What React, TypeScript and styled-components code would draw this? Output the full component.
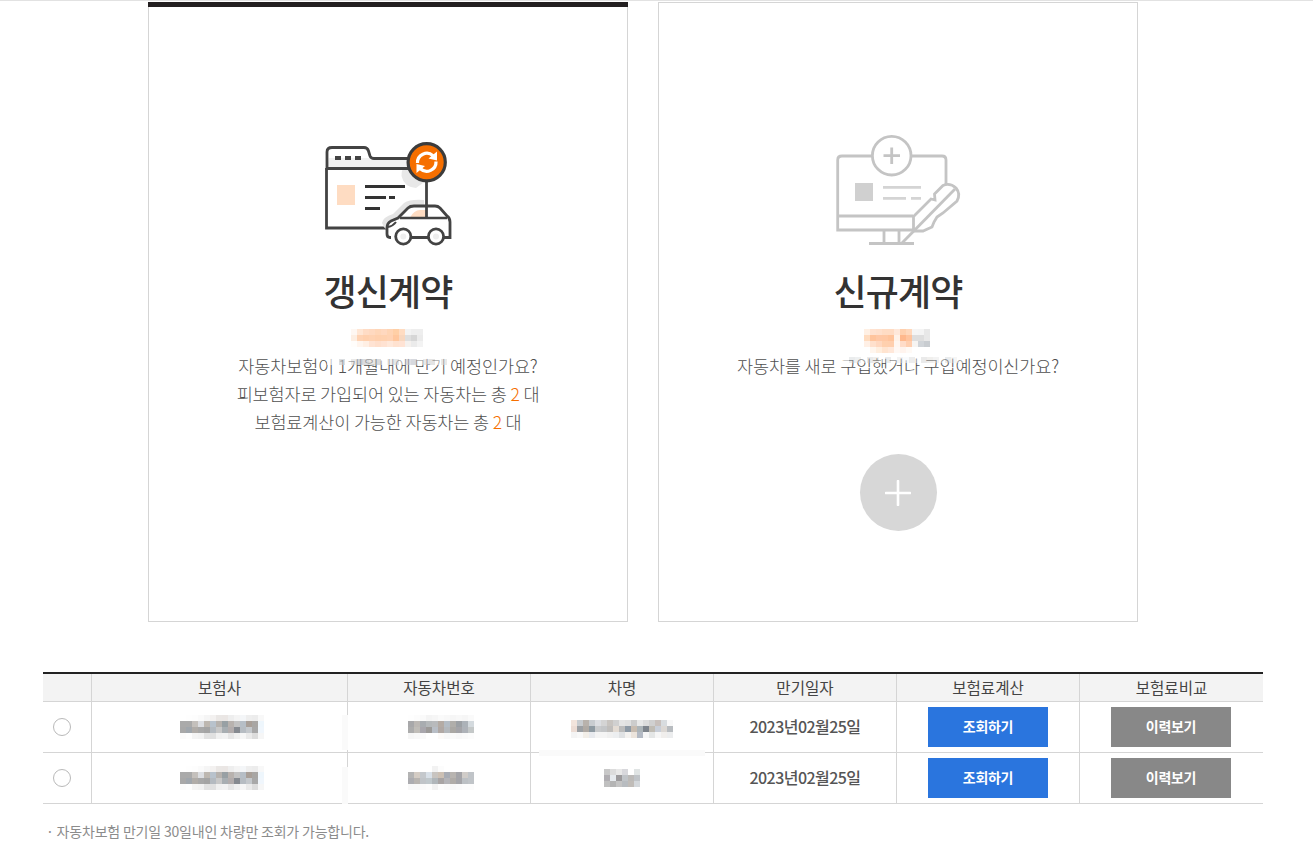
import React from "react";
import styled, { createGlobalStyle } from "styled-components";

const Global = createGlobalStyle`
  html, body { margin: 0; padding: 0; background: #fff; }
  body { font-family: "Noto Sans CJK KR", "Noto Sans", sans-serif; color: #333; }
`;

const Page = styled.div`
  width: 1313px;
  min-height: 855px;
  border-top: 1px solid #e2e2e2;
  box-sizing: border-box;
  padding: 1px 50px 0 43px;
`;
const Cards = styled.section`
  display: flex;
  gap: 30px;
  padding-left: 105px;
`;
const Card = styled.article<{ $active?: boolean }>`
  position: relative;
  width: 480px;
  height: 620px;
  box-sizing: border-box;
  border: 1px solid #d5d5d5;
  padding-top: 117px;
  display: flex;
  flex-direction: column;
  align-items: center;
  ${(p) => p.$active && `
    &::before {
      content: "";
      position: absolute;
      left: -1px; right: -1px; top: -1px;
      height: 5px;
      background: #231f20;
    }
  `}
`;
const Illustration = styled.svg`
  display: block;
  width: 180px;
  height: 140px;
  flex: none;
`;
const Title = styled.h2`
  margin: 5px 0 0;
  font-size: 36px;
  line-height: 50px;
  font-weight: 500;
  letter-spacing: -0.9px;
  color: #333;
`;
const Desc = styled.p`
  margin: 37px 0 0;
  font-size: 17.5px;
  line-height: 28px;
  font-weight: 300;
  color: #505050;
  text-align: center;
  letter-spacing: -0.15px;
`;
const Num = styled.em`
  font-style: normal;
  color: #f66f00;
`;
const AddButton = styled.button`
  margin-top: 74px;
  width: 77px;
  height: 77px;
  padding: 0;
  border: 0;
  border-radius: 50%;
  background: #d7d7d7;
  display: flex;
  align-items: center;
  justify-content: center;
`;
const Redact = styled.svg<{ $left: number; $top: number }>`
  position: absolute;
  left: ${(p) => p.$left}px;
  top: ${(p) => p.$top}px;
  display: block;
`;
const InlineRedact = styled.svg<{ $dx?: number; $dy?: number }>`
  display: block;
  margin: ${(p) => p.$dy ?? 0}px auto 0;
  position: relative;
  left: ${(p) => p.$dx ?? 0}px;
`;

const Table = styled.table`
  margin-top: 50px;
  width: 1220px;
  table-layout: fixed;
  border-collapse: separate;
  border-spacing: 0;
  border-top: 2px solid #222;
`;
const Th = styled.th`
  height: 27px;
  padding: 0;
  background: #f3f3f3;
  border-bottom: 1px solid #d5d5d5;
  font-size: 15.6px;
  font-weight: 400;
  color: #444;
  text-align: center;
  line-height: 27px;
  & + & { border-left: 1px solid #d5d5d5; }
`;
const Td = styled.td`
  position: relative;
  height: 50px;
  padding: 0;
  border-bottom: 1px solid #d5d5d5;
  text-align: center;
  & + & { border-left: 1px solid #d5d5d5; }
`;
const DateText = styled.span`
  display: block;
  margin-top: -2px;
  font-size: 16px;
  font-weight: 500;
  letter-spacing: -0.55px;
  color: #555;
`;
const Radio = styled.span`
  display: block;
  width: 18px;
  height: 18px;
  margin: 0 0 0 10px;
  box-sizing: border-box;
  border: 1px solid #b9b9b9;
  border-radius: 50%;
  background: #fff;
`;
const ActionButton = styled.button<{ $tone: string; $left: number }>`
  display: block;
  width: 120px;
  height: 40px;
  margin: 0 0 0 ${(p) => p.$left}px;
  padding: 0 0 2px;
  border: 0;
  background: ${(p) => p.$tone};
  color: #fff;
  font-family: inherit;
  font-size: 14px;
  font-weight: 700;
  letter-spacing: -0.3px;
`;
const Smear = styled.span<{ $x: number; $y: number; $w: number; $h: number }>`
  position: absolute;
  z-index: 1;
  left: ${(p) => p.$x}px;
  top: ${(p) => p.$y}px;
  width: ${(p) => p.$w}px;
  height: ${(p) => p.$h}px;
  background: #fafafa;
`;
const Note = styled.p`
  margin: 17px 0 0;
  font-size: 14px;
  line-height: 20px;
  font-weight: 400;
  letter-spacing: -0.2px;
  color: #8c8c8c;
  padding-left: 3px;
`;

type Grid = string[];
const cellsOf = (g: Grid) => g.map((r) => r.split(" "));

const Cells: React.FC<{ grid: Grid }> = ({ grid }) => (
  <>
    {cellsOf(grid).map((row, y) =>
      row.map((c, x) =>
        c === "-" ? null : <rect key={`${x}-${y}`} x={x * 6} y={y * 6} width={6} height={6} fill={`#${c}`} />
      )
    )}
  </>
);
const size = (g: Grid) => ({
  width: cellsOf(g)[0].length * 6,
  height: g.length * 6,
  shapeRendering: "crispEdges" as const,
});

const insurer: Grid = [
  "ffffff fefefe fdfdfd fafafa f5f5f5 f3f1f0 eae7e5 eae6e4 eeeeee f4f4f4 f4f6f8 eeeeee ececec f8f8f8",
  "aaaaaa aaaaaa c4c0bc dcdee2 bdb7b0 b8c2cc b6b2ae 98a0a4 b8b2ae c2c2c2 b6bec6 a89f98 a8a6a4 eef6fc",
  "a8a8a8 a0a6ac b0aca8 a8a8a8 a4a4a4 b4bac0 c8c8c8 a8aeb2 b2acac 868a90 b6bcc2 c4c8cc a8a8a8 f0f6fc",
  "fbfbfb fdfdfd f4f4f4 f2f2f2 e2e2e2 e0e0e0 f0f0f0 f2f2f2 e6e6e6 f0f0f0 f6f6f6 eaeaea dcdcdc f6f6f6",
];
const plateA: Grid = [
  "fefefe fcfcfc fafafa f4f4f4 f6f6f6 fafafa f8f8f8 f6f6f6 f8f8f8 f6f6f6 fafafa",
  "a8a8aa bcb8b4 a8acb0 b4b8ba b8babc b4aba4 b4bcc4 b0aeaa 9ca0a4 acb2b8 d4dade",
  "acacac c0bdb8 a8a6ac 9c9a98 b8bec6 b0a8a4 b4b8bc aaa8a4 a4a4a8 aeb2b8 c4c8c8",
  "f6f6f6 f8f8f8 fafafa ffffff ffffff fcfaf8 f8f8f8 fafafa f8f8f8 fafafa fcfcfc",
];
const plateB: Grid = [
  "ffffff ffffff ffffff ffffff f2f2f2 fcfcfc ffffff ffffff ffffff ffffff ffffff",
  "b4b4b4 d4ccc4 c4c8cc d8e0e8 c8c4c0 ccc0b4 a8acb4 b8b4b0 a4a4a8 d0ccc8 c0c4c8",
  "acacb0 b8b4b0 c0c4c8 c0c8cc b0b6ba a8a4a4 b4b4b8 b0aca8 a4a4a8 bcc0c4 c0c4c8",
  "f8f8f8 f8f8f8 fafafa fcfcfc f2f2f2 fcfcfc fafafa f8f8f8 fafafa fcfcfc fcfcfc",
];
const carA: Grid = [
  "f2e4dc c8ccd0 b8b2ac c8ccd0 dcdee2 d4d4d4 c8c4c0 d0d0d0 e4e4e4 e0e0e0 cccccc e8e8e8 dcdcdc d0d0d0 c8c0bc d8dcdf f8f8f8",
  "ecdcd4 9ca0a4 b0aaa4 8e9aa2 c8cacc c4c6c8 c0bebc e4dcd4 bcbcbc 8e9aa6 c8bcb0 acb4b8 7e848c c0bcb4 c8ced8 dcd8d4 b8bcc0",
  "f4f4f4 f8f8f8 f2eee8 e8eaee f4f4f4 f4f4f4 f0f0f0 eceef0 e0e2e4 f4f2f0 ece4dc b4bac4 f6f6f6 e4e6e6 f6f6f6 f0eeec ecedee",
];
const carB: Grid = [
  "c8c8c8 dcdcdc e8e8e8 d8d8dc ffffff e0e4e4",
  "b0aeb2 e6eaee 9c9a9c c0c4c8 bcbab8 c0c4c8",
  "c0c0c0 b4b4b4 c4c4c4 b8bcc0 c0bcb8 d4d8dc",
];
const nameA: Grid = [
  "fef7f2 ffe6d4 ffdcc5 ffd9c0 ffd6b8 ffd8bf ffd4b4 ffcfa6 ffdcc2 f3f3f3 eeeeee eeeeee",
  "fdeee2 ffd3b4 ffd0ae ffd2b2 ffd0ae ffd1af ffd2b3 ffc79e f8d7bf dfdfdf d6d6d6 ebebeb",
  "fffdfb fff5ee ffefe4 ffe3d3 ffdfcc ffe2d2 ffe8da ffe2d0 ffe3d4 f5f1ee ebebeb f3f3f3",
];
const nameB: Grid = [
  "fff0e4 ffe2d0 ffe0cc ffdcc4 ffdcc4 ffe8da ffd0ae ffd8bc f5f5f5 f4f4f4 e8e8e8",
  "ffdcc0 ffc49c ffc8a6 ffc8a4 ffc49c fff2e8 ffb88c ffc49e dedede dedede e8e8e8",
  "fff0e6 ffe0cc ffd8c0 ffd0ae ffcfae fff6f0 ffdcc8 ffcfb0 f6f4f2 d0d4d8 c8ccd0",
  "- fff6ee ffeede ffe4d0 ffe8da fff8f4 fff4ee fffaf6 - - -",
];
const W = "ffffffe8";
const smearA: Grid = [
  `${W} ${W} ${W} ${W} ${W} ${W} ${W} ${W} ${W} ${W} ${W} ${W} ${W} ${W} ${W} ${W} ${W} ${W} ${W} ${W}`,
  "ffffffa0 ffffff90 c8ccd0a0 ffffff80 d8d8d890 b8bcc4a0 c4c8cca0 d8d4d090 b8bcc090 ffffff80 e8e8e890 d0d4d890 ffffff80 c8c8d090 b8bcc490 ffffff80 d8d8d890 d0d0d090 ffffff80 d8d8d890",
];
const smearB: Grid = [
  "ffffffa0 c8ccd060 d8dce070 ffffff60 c8c8c860 d8d4d060 ffffff70 c8ccd060 ffffff60 e0e0e060 f4f8fc90 d0d0d060 ffffff60 c8c8c860 d8d4d060 e0e0e060 ffffff60 c8ccd060 e8e8e860 ffffff60",
];

const LINE = "#434343";

const RenewIcon = () => (
  <Illustration viewBox="-2 0 180 140" fill="none" aria-hidden="true">
    <path d="M108 41 Q101 48 101.500 56 Q104 67 116 68 L127 60 Z" fill="#e8e8e8" />
    <path d="M29 38 H108 V48 H27 Z" fill="#f1f1f1" />
    <path d="M27 50 V32 Q27 27.500 32 27.500 H64 Q67.500 27.500 68.500 31 L70 36 Q71 38.500 74 38.500 H110" stroke={LINE} strokeWidth="2.800" />
    <path d="M26.500 48.500 H110 M26.500 48 V108 H88" stroke={LINE} strokeWidth="2.800" />
    <path d="M35 36 h6 v4 h-6z M45 36 h6 v4 h-6z M55 36 h6 v4 h-6z" fill={LINE} />
    <rect x="37" y="65" width="18" height="20" fill="#fedcc2" />
    <path d="M65 66.500 H105 M65 77.500 H86 M89 77.500 H95 M65 88.500 H80" stroke="#333" strokeWidth="2.800" />
    <path d="M82 103 Q83 97 93 94 L104 83 Q110 79 124 80 L125 100 L95 113 Q85 112 82 103 Z" fill="#e4e4e4" />
    <path d="M91 117.500 H90 Q87 117.500 87 114 V108 Q87 103 91 101 L98 98 L108 88 Q110 86 114 86 H135 Q138 86 140 88 L147 96 Q150 98 150 102 V117.500 H143 M96 117.500 H128" stroke={LINE} strokeWidth="2.800" fill="#fff" />
    <path d="M110 97.500 Q114 90 120 90 H126 V97.500 Z" fill="#fedcc2" />
    <path d="M100 98 H147" stroke={LINE} strokeWidth="2.500" />
    <path d="M88 107 Q93 106 96 102" stroke={LINE} strokeWidth="2" />
    <path d="M126.500 60 V98" stroke={LINE} strokeWidth="2.800" />
    <circle cx="103.300" cy="116.500" r="7.600" fill="#fff" stroke={LINE} strokeWidth="2.800" />
    <circle cx="103.300" cy="116.500" r="3" fill="#eee" />
    <circle cx="136" cy="116.500" r="7.600" fill="#fff" stroke={LINE} strokeWidth="2.800" />
    <circle cx="136" cy="116.500" r="3" fill="#eee" />
    <circle cx="126.700" cy="42.300" r="18.600" fill="#f66f00" stroke="#3c3c3c" strokeWidth="3.200" />
    <path d="M117.500 43 A9.300 9.300 0 0 1 133 35.700" stroke="#fff" strokeWidth="3.200" />
    <path d="M136 41.500 A9.300 9.300 0 0 1 120.400 48.800" stroke="#fff" strokeWidth="3.200" />
    <path d="M137 31.500 L137 40.500 L128.500 38.500 Z M116.500 53 L116.500 44 L125 46 Z" fill="#fff" />
  </Illustration>
);

const STROKE = "#c4c4c4";
const NewIcon = () => (
  <Illustration viewBox="-2 0 180 140" fill="none" aria-hidden="true">
    <path d="M62 36 H32 Q27.700 36 27.700 40 V110 H103 M101 36 H132 Q136 36 136 40 V70 M27.700 96 H103" stroke={STROKE} strokeWidth="2.800" />
    <circle cx="81.700" cy="35.700" r="19.300" stroke={STROKE} strokeWidth="2.800" />
    <path d="M73.500 35.700 H90 M81.700 27.500 V44" stroke={STROKE} strokeWidth="2.800" />
    <rect x="45" y="63" width="18" height="18" fill="#d0d0d0" />
    <path d="M73 67.300 H111 M73 78.300 H96 M101 78.300 H111" stroke="#d4d4d4" strokeWidth="2.800" />
    <path d="M74 110 V123 M89 110 V123 M59 123.500 H104" stroke={STROKE} strokeWidth="2.800" />
    <path d="M103.500 96.500 L121 79 L125 80 L124.500 74 L133 65.500 Q140 62.500 146 68 Q151 74 147 81 L133 93 L127 97 L124 102 L122 107 L113 111 H103.500 Z" fill="#fff" stroke={STROKE} strokeWidth="2.800" />
    <path d="M92 123 L145 69" stroke={STROKE} strokeWidth="2.800" />
  </Illustration>
);

const rows = [
  { plate: plateA, car: carA, carDy: 4, smear: { y: 13, w: 6, h: 35 } },
  { plate: plateB, car: carB, carDy: 0, smear: { y: 14, w: 6, h: 37 } },
];
const headers = ["", "보험사", "자동차번호", "차명", "만기일자", "보험료계산", "보험료비교"];
const widths = [48, 256, 183, 183, 183, 183, 184];

export default function App() {
  return (
    <Page>
      <Global />
      <Cards>
        <Card $active>
          <RenewIcon />
          <Title>갱신계약</Title>
          <Redact $left={202} $top={326} {...size(nameA)}><Cells grid={nameA} /></Redact>
          <Desc>
            자동차보험이 1개월내에 만기 예정인가요?
            <br />
            피보험자로 가입되어 있는 자동차는 총 <Num>2</Num> 대
            <br />
            보험료계산이 가능한 자동차는 총 <Num>2</Num> 대
          </Desc>
          <Redact $left={178} $top={350} {...size(smearA)}><Cells grid={smearA} /></Redact>
        </Card>
        <Card>
          <NewIcon />
          <Title>신규계약</Title>
          <Redact $left={205} $top={326} {...size(nameB)}><Cells grid={nameB} /></Redact>
          <Desc>자동차를 새로 구입했거나 구입예정이신가요?</Desc>
          <Redact $left={184} $top={354} {...size(smearB)}><Cells grid={smearB} /></Redact>
          <AddButton aria-label="추가">
            <svg width="26" height="26" viewBox="0 0 26 26" fill="none">
              <path d="M1 13 H25 M13 1 V25" stroke="#fff" strokeWidth="2.600" strokeLinecap="round" />
            </svg>
          </AddButton>
        </Card>
      </Cards>
      <Table>
        <colgroup>
          {widths.map((w, i) => (
            <col key={i} style={{ width: w }} />
          ))}
        </colgroup>
        <thead>
          <tr>
            {headers.map((h, i) => (
              <Th key={i}>{h}</Th>
            ))}
          </tr>
        </thead>
        <tbody>
          {rows.map((r, i) => (
            <tr key={i}>
              <Td>
                <Radio />
              </Td>
              <Td>
                <InlineRedact $dx={2} {...size(insurer)}><Cells grid={insurer} /></InlineRedact>
                <Smear $x={250} $y={r.smear.y} $w={r.smear.w} $h={r.smear.h} />
              </Td>
              <Td>
                <InlineRedact $dx={2} {...size(r.plate)}><Cells grid={r.plate} /></InlineRedact>
              </Td>
              <Td>
                <InlineRedact $dy={r.carDy} {...size(r.car)}><Cells grid={r.car} /></InlineRedact>
                {i === 0 && <Smear $x={8} $y={48} $w={166} $h={6} />}
              </Td>
              <Td>
                <DateText>2023년02월25일</DateText>
              </Td>
              <Td>
                <ActionButton $tone="#2a75de" $left={31}>조회하기</ActionButton>
              </Td>
              <Td>
                <ActionButton $tone="#888888" $left={31}>이력보기</ActionButton>
              </Td>
            </tr>
          ))}
        </tbody>
      </Table>
      <Note>· 자동차보험 만기일 30일내인 차량만 조회가 가능합니다.</Note>
    </Page>
  );
}
